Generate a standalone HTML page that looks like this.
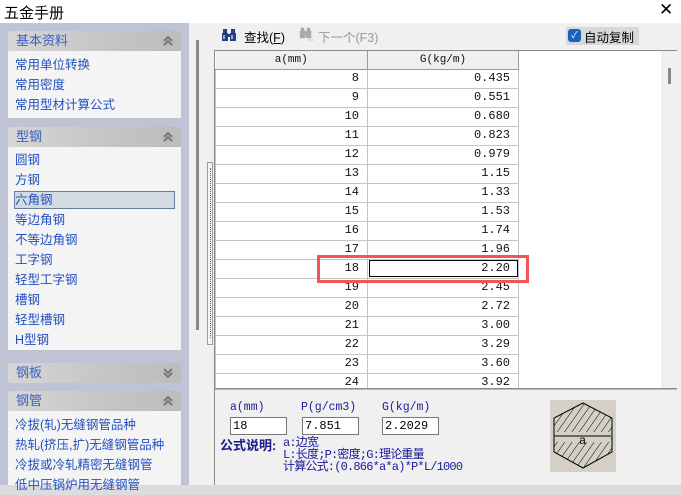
<!DOCTYPE html>
<html><head><meta charset="utf-8"><style>
*{margin:0;padding:0;box-sizing:border-box}
body{width:681px;height:495px;background:#dcdcdc;position:relative;overflow:hidden;font-family:"Liberation Sans","Noto Sans CJK SC",sans-serif}
.abs{position:absolute}
.title{left:0;top:0;width:681px;height:23px;background:#fff;font-size:15px;color:#000}
.left{left:0;top:23px;width:189px;height:462px;background:#bfc3d3}
.gh{position:absolute;left:8px;width:173px;height:20px;background:linear-gradient(90deg,#d6d6d6,#c4c4c4 60%,#bcbcbc);border-radius:3px 3px 0 0;font-size:13px;color:#3a5fbf;padding:0 0 0 8px;line-height:20px}
.gh svg{position:absolute;right:8px;top:5px}
.gc{position:absolute;left:8px;width:173px;background:#f4f4f4;font-size:12.5px;color:#2350c0}
.gc div{height:20px;line-height:20px;padding-left:7px;white-space:nowrap;overflow:hidden}
.right{left:189px;top:23px;width:492px;height:462px;background:#f0f0f0}
table{border-collapse:collapse;font-family:"Liberation Mono","Noto Sans CJK SC",monospace;font-size:12px}
td{border:1px solid #c4c4c4;height:19px;width:151px;text-align:right;padding-right:8px;background:#fff;color:#111;line-height:17px}
th{height:18px;font-weight:normal;background:#efefef;border-right:1px solid #999;border-bottom:1px solid #999;font-size:11px;color:#111}
.lbl{font-family:"Liberation Mono",monospace;font-size:11.5px;color:#1a1a9a}
.inp{position:absolute;height:18px;border:1px solid #777;background:#fff;font-family:"Liberation Mono",monospace;font-size:12px;padding:1px 0 0 2px;width:57px}
</style></head><body>
<svg width="0" height="0" style="position:absolute"><defs>
<symbol id="up" viewBox="0 0 10 10"><path d="M1 5 L5 1 L9 5 M1 9 L5 5 L9 9" fill="none" stroke="#777" stroke-width="2"/></symbol>
<symbol id="dn" viewBox="0 0 10 10"><path d="M1 1 L5 5 L9 1 M1 5 L5 9 L9 5" fill="none" stroke="#777" stroke-width="2"/></symbol>
</defs></svg>
<div class="abs title"><span style="position:absolute;left:4px;top:2px">五金手册</span><span style="position:absolute;left:659px;top:0px;font-size:17px">✕</span></div>
<div class="abs left">
 <div class="gh" style="top:8px">基本资料<svg width="10" height="10"><use href="#up"/></svg></div>
 <div class="gc" style="top:28px;height:67px;padding-top:4px"><div>常用单位转换</div><div>常用密度</div><div>常用型材计算公式</div></div>
 <div class="gh" style="top:104px">型钢<svg width="10" height="10"><use href="#up"/></svg></div>
 <div class="gc" style="top:124px;height:203px;padding-top:3px"><div>圆钢</div><div>方钢</div><div style="background:#d4dae4;border:1px solid #6a7e9a;margin:1px 6px 1px 6px;padding-left:0;height:18px;line-height:16px">六角钢</div><div>等边角钢</div><div>不等边角钢</div><div>工字钢</div><div>轻型工字钢</div><div>槽钢</div><div>轻型槽钢</div><div>H型钢</div></div>
 <div class="gh" style="top:340px;border-radius:3px">钢板<svg width="10" height="10"><use href="#dn"/></svg></div>
 <div class="gh" style="top:368px">钢管<svg width="10" height="10"><use href="#up"/></svg></div>
 <div class="gc" style="top:388px;height:74px;padding-top:4px"><div>冷拔(轧)无缝钢管品种</div><div>热轧(挤压,扩)无缝钢管品种</div><div>冷拔或冷轧精密无缝钢管</div><div>低中压锅炉用无缝钢管</div></div>
</div>
<div class="abs right">
 <div class="abs" style="left:7px;top:17px;width:3px;height:290px;background:#888"></div>
 <div class="abs" style="left:18px;top:139px;width:6px;height:183px;border:1px solid #999;background:#f4f4f4"></div>
 <div class="abs" style="left:21px;top:145px;width:0;height:170px;border-left:1px dotted #1a6fd6"></div>
 <div class="abs" style="left:24px;top:0;width:468px;height:27px;background:#f0f0f0;font-size:12.5px">
  <svg class="abs" style="left:8px;top:5px" width="16" height="14" viewBox="0 0 16 14"><path d="M2 1h4v4h-4zM10 1h4v4h-4zM1 5h6v8h-6zM9 5h6v8h-6zM6 6h4v3h-4z" fill="#2a3f80"/><path d="M2 7h2v4h-2zM10 7h2v4h-2z" fill="#8fa6d8"/></svg>
  <span class="abs" style="left:31px;top:4px">查找(<u>F</u>)</span>
  <svg class="abs" style="left:86px;top:4px" width="16" height="16" viewBox="0 0 16 16"><path d="M2 1h3v3h-3zM8 1h3v3h-3zM1 4h5v7h-5zM7 4h5v7h-5zM5 5h3v3h-3zM9 13h6" fill="#aaa" stroke="#aaa" stroke-width="0.5"/></svg>
  <span class="abs" style="left:105px;top:4px;color:#999">下一个(F3)</span>
  <div class="abs" style="left:353px;top:4px;width:73px;height:18px;background:#d8d8d8"></div>
  <div class="abs" style="left:355px;top:6px;width:13px;height:13px;background:#1565c0;border-radius:3px;color:#fff;font-size:9px;text-align:center;line-height:13px">✓</div>
  <span class="abs" style="left:371px;top:4px">自动复制</span>
 </div>
 <div class="abs" style="left:25px;top:27px;width:463px;height:339px;background:#fff;border:1px solid #888;border-right:none;overflow:hidden">
  <table style="position:absolute;left:0;top:0">
   <tr><th style="width:152px">a(mm)</th><th style="width:151px">G(kg/m)</th></tr>
   <tr><td>8</td><td>0.435</td></tr><tr><td>9</td><td>0.551</td></tr><tr><td>10</td><td>0.680</td></tr><tr><td>11</td><td>0.823</td></tr><tr><td>12</td><td>0.979</td></tr><tr><td>13</td><td>1.15</td></tr><tr><td>14</td><td>1.33</td></tr><tr><td>15</td><td>1.53</td></tr><tr><td>16</td><td>1.74</td></tr><tr><td>17</td><td>1.96</td></tr><tr><td>18</td><td style="outline:1px solid #000;outline-offset:-2px">2.20</td></tr><tr><td>19</td><td>2.45</td></tr><tr><td>20</td><td>2.72</td></tr><tr><td>21</td><td>3.00</td></tr><tr><td>22</td><td>3.29</td></tr><tr><td>23</td><td>3.60</td></tr><tr><td>24</td><td>3.92</td></tr>
  </table>
  <div class="abs" style="left:446px;top:0;width:17px;height:339px;background:#f0f0f0"></div>
  <div class="abs" style="left:453px;top:17px;width:3px;height:16px;background:#888"></div>
 </div>
 <div class="abs" style="left:128px;top:232px;width:212px;height:28px;border:3px solid #f25555"></div>
 <div class="abs" style="left:25px;top:366px;width:463px;height:96px;border-left:1px solid #888;border-top:1px solid #bbb;background:#f0f0f0">
  <span class="abs lbl" style="left:15px;top:11px">a(mm)</span>
  <span class="abs lbl" style="left:86px;top:11px">P(g/cm3)</span>
  <span class="abs lbl" style="left:167px;top:11px">G(kg/m)</span>
  <div class="inp" style="left:15px;top:27px">18</div>
  <div class="inp" style="left:87px;top:27px">7.851</div>
  <div class="inp" style="left:167px;top:27px">2.2029</div>
  <span class="abs" style="left:5px;top:45px;font-size:13px;font-weight:bold;color:#1a1a8a">公式说明:</span>
  <div class="abs lbl" style="left:68px;top:47px;line-height:12px;font-size:12px;letter-spacing:-0.8px;white-space:nowrap">a:边宽<br>L:长度;P:密度;G:理论重量<br>计算公式:(0.866*a*a)*P*L/1000</div>
  <svg class="abs" style="left:335px;top:10px" width="66" height="72" viewBox="0 0 66 72">
   <rect width="66" height="72" fill="#d4d0c8"/>
   <defs><pattern id="h" width="6" height="6" patternUnits="userSpaceOnUse" patternTransform="rotate(35)"><line x1="0" y1="0" x2="0" y2="6" stroke="#000" stroke-width="1"/></pattern></defs>
   <polygon points="33,3 62,18 62,52 33,68 4,52 4,18" fill="url(#h)" stroke="#000"/>
   <rect x="5" y="32" width="56" height="10" fill="#d4d0c8"/>
   <line x1="5" y1="36" x2="61" y2="36" stroke="#000"/>
   <text x="29" y="44" font-size="12" font-family="Liberation Mono">a</text>
  </svg>
 </div>
</div>
</body></html>
